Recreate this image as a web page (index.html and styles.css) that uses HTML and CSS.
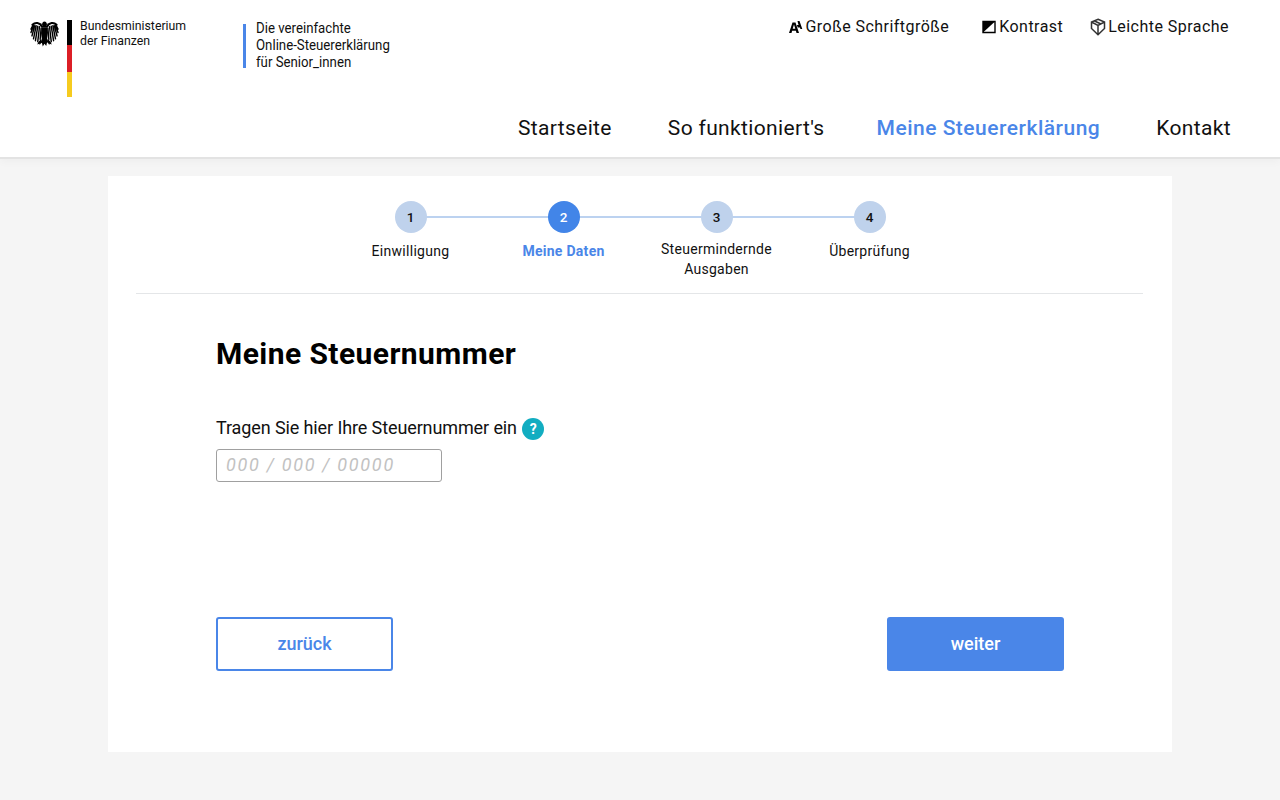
FILE: index.html
```html
<!DOCTYPE html>
<html lang="de">
<head>
<meta charset="utf-8">
<title>Meine Steuernummer</title>
<link rel="stylesheet" href="styles.css">
</head>
<body>
<header class="site-header">
  <div class="top-row">
    <div class="brand">
      <svg class="eagle" viewBox="0 0 30 28" aria-hidden="true">
        <g id="wing" fill="none" stroke="#000" stroke-width="1.5" stroke-linecap="round">
          <path d="M12.500 7C10 2.500 5.500 2 2.500 5" stroke-width="2.200"/>
          <path d="M3 5.500 1 9.500M3.500 6 1 13M4.800 6 2 16.500M6.300 6 3.600 19.500M8 6.500 5.600 21.500M9.800 7 8 22.500M11.500 8.500 10.500 20"/>
        </g>
        <use href="#wing" transform="matrix(-1 0 0 1 30 0)"/>
        <path d="M15 1.500c1.300 0 2.100.8 2.200 2l1.800.6-1.700.7-.2 3.200h-4.200l-.2-3.200-1.700-.7 1.800-.6c.1-1.200.9-2 2.200-2z"/>
        <path d="M12 8h6l.6 5-.9 6.500 1.800 4.500-1.800-.8-.9 3.800L15 24.500 13.200 27.500l-.9-3.800-1.800.8 1.800-4.500-.9-6.500z"/>
        <path d="M11.500 19.500 8.500 23l-1 2.500 2.200-1 .4 1.500 2-3.500zM18.500 19.500l3 3.500 1 2.500-2.200-1-.4 1.500-2-3.500z"/>
      </svg>
      <span class="flag" aria-hidden="true"></span>
      <div class="ministry"><div class="narrow">Bundesministerium<br>der Finanzen</div></div>
      <div class="claim">
        <span class="claim-bar" aria-hidden="true"></span>
        <div class="claim-text narrow">Die vereinfachte<br>Online-Steuererklärung<br>für Senior_innen</div>
      </div>
    </div>
    <ul class="tools">
      <li class="tool">
        <svg class="tool-icon" viewBox="0 0 14 14" aria-hidden="true"><path d="M0 13 3.500 2.500h3L10 13H7.500l-.6-2.200H3.100L2.500 13zM3.700 8.800h2.600L5 4.500z"/><path d="M8.500 1h2l2.800 8h-1.900l-.4-1.500H8.800l-1-2.500h1.800l-.7-2.200z"/></svg>
        <span>Große Schriftgröße</span>
      </li>
      <li class="tool">
        <svg class="tool-icon" viewBox="0 0 14 14" aria-hidden="true"><path d="M1 1.500h12v11H1z" fill="#fff" stroke="#000" stroke-width="1.400"/><path d="M1 1.500h12L1 12.500z"/></svg>
        <span>Kontrast</span>
      </li>
      <li class="tool tool-last">
        <svg class="tool-icon tool-icon-wide" viewBox="0 0 16 18" aria-hidden="true"><path d="M8 1.200 14.500 4v6.500L8 16.800 1.500 10.500V4zM1.500 4 8 7.500 14.500 4M8 7.500v9.300M4 2.700 11 6" fill="none" stroke="#333" stroke-width="1.500"/></svg>
        <span>Leichte Sprache</span>
      </li>
    </ul>
  </div>
  <nav class="main-nav">
    <a class="nav-link">Startseite</a>
    <a class="nav-link">So funktioniert's</a>
    <a class="nav-link is-active">Meine Steuererklärung</a>
    <a class="nav-link">Kontakt</a>
  </nav>
</header>

<main class="card">
  <ol class="stepper">
    <li class="step"><span class="step-dot">1</span><span class="step-label">Einwilligung</span></li>
    <li class="step is-current"><span class="step-dot">2</span><span class="step-label">Meine Daten</span></li>
    <li class="step step-long"><span class="step-dot">3</span><span class="step-label">Steuermindernde Ausgaben</span></li>
    <li class="step"><span class="step-dot">4</span><span class="step-label">Überprüfung</span></li>
  </ol>
  <section class="form-area">
    <h1 class="title">Meine Steuernummer</h1>
    <label class="field-label" for="nr">Tragen Sie hier Ihre Steuernummer ein <span class="help">?</span></label>
    <input class="field-input" id="nr" type="text" placeholder="000 / 000 / 00000">
    <div class="actions">
      <button class="btn btn-outline" type="button">zurück</button>
      <button class="btn btn-primary" type="button">weiter</button>
    </div>
  </section>
</main>
</body>
</html>
```
FILE: styles.css
```css
* { box-sizing: border-box; }
html, body { margin: 0; padding: 0; }
body {
  background: #f5f5f5;
  color: #000;
  font-family: Roboto, "Liberation Sans", sans-serif;
  height: 800px;
  overflow: hidden;
}
.site-header {
  background: #fff;
  height: 159px;
  border-bottom: 2px solid #e3e3e3;
  box-shadow: 0 3px 8px rgba(0,0,0,.03);
  padding: 0 49px 0 30px;
  position: relative;
}
.top-row { display: flex; justify-content: space-between; align-items: flex-start; height: 97px; padding-top: 20px; }
.brand { display: flex; align-items: flex-start; }
.eagle { width: 29px; height: 27px; margin-right: 8px; }
.flag {
  width: 5px; height: 77px; margin-right: 8px;
  background: linear-gradient(#000 0 25px, #dc1f26 25px 52px, #f6cb1f 52px);
}
.narrow { transform: scaleX(.945); transform-origin: left center; white-space: nowrap; }
.ministry { font-size: 13px; line-height: 15px; color: #111; width: 163px; margin-top: -2px; }
.claim { display: flex; align-items: center; gap: 10px; height: 51px; }
.claim-bar { width: 3px; height: 44px; background: #4a86e8; }
.claim-text { font-size: 14px; line-height: 17px; color: #111; }
.tools { list-style: none; margin: 0; padding: 0 2px 0 0; display: flex; gap: 33px; }
.tool { display: flex; align-items: center; gap: 3px; font-size: 16px; letter-spacing: .46px; line-height: 14px; color: #111; height: 14px; }
.tool-icon { width: 14px; height: 14px; flex: none; }
.tool-icon-wide { width: 16px; height: 18px; margin-left: -6px; margin-right: -1px; }
.main-nav { display: flex; justify-content: flex-end; gap: 56px; padding-top: 19px; }
.nav-link { font-size: 21px; line-height: 25px; letter-spacing: .35px; color: #111; }
.nav-link.is-active { color: #4a86e8; font-weight: 500; letter-spacing: .5px; margin-left: -4px; }

.card {
  width: 1064px;
  height: 576px;
  margin: 17px auto 0;
  background: #fff;
  padding: 0 28px;
}
.stepper {
  list-style: none; margin: 0 1px 0 0; padding: 25px 0 0 1px;
  height: 118px;
  border-bottom: 1px solid #e4e6e8;
  display: flex; justify-content: center;
}
.step { width: 153px; display: flex; flex-direction: column; align-items: center; position: relative; }
.step:not(:last-child)::after {
  content: ""; position: absolute; left: 50%; width: 100%; top: 15px; height: 2px; background: #bcd2f0;
}
.step-dot {
  width: 32px; height: 32px; border-radius: 50%;
  background: #bfd2ec; color: #111;
  font-size: 13.5px; font-weight: 500;
  display: flex; align-items: center; justify-content: center;
  position: relative; z-index: 1;
}
.step-label { font-size: 14px; line-height: 20px; letter-spacing: .28px; text-align: center; margin-top: 8px; width: 124px; color: #111; }
.step-long .step-label { margin-top: 6px; }
.is-current .step-dot { background: #4285e8; color: #fff; }
.is-current .step-label { color: #4a86e8; font-weight: 700; }

.form-area { padding: 42px 80px 0; }
.title { margin: 0; font-size: 30px; line-height: 36px; font-weight: 700; letter-spacing: .43px; color: #000; }
.field-label { display: block; height: 24px; margin-top: 44px; font-size: 18px; line-height: 24px; letter-spacing: -.11px; color: #111; }
.help {
  display: inline-flex; align-items: center; justify-content: center;
  width: 22px; height: 22px; border-radius: 50%;
  background: #12adc1; color: #fff; font-size: 14px; font-weight: 700;
  vertical-align: 0; margin-left: 1px;
}
.field-input {
  display: block; margin-top: 9px;
  width: 226px; height: 33px;
  border: 1px solid #a0a0a0; border-radius: 3px;
  padding: 0 9px 2px;
  font-family: inherit; font-size: 18px; font-style: italic; letter-spacing: 1.7px;
  background: #fff;
}
.field-input::placeholder { color: #c2c2c2; opacity: 1; }
.actions { display: flex; justify-content: space-between; margin-top: 135px; }
.btn {
  width: 177px; height: 54px; border-radius: 3px; padding: 0 0 2px;
  font-family: inherit; font-size: 18px; font-weight: 500;
}
.btn-outline { background: #fff; border: 2px solid #4a86e8; color: #4a86e8; }
.btn-primary { background: #4a86e8; border: 0; color: #fff; }
```
